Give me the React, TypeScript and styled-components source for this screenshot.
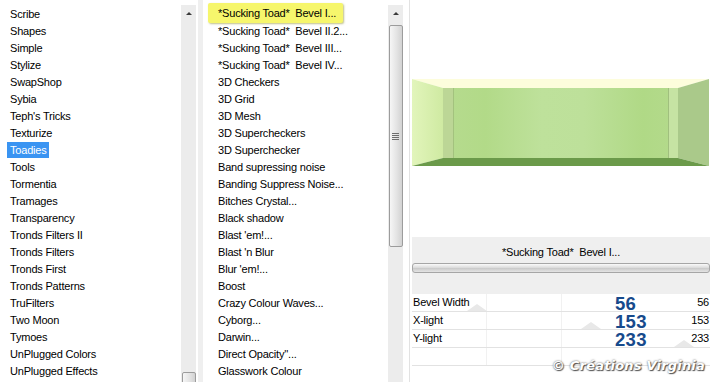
import React from "react"
import styled, {createGlobalStyle} from "styled-components"

const categories = [
  "Scribe",
  "Shapes",
  "Simple",
  "Stylize",
  "SwapShop",
  "Sybia",
  "Teph's Tricks",
  "Texturize",
  "Toadies",
  "Tools",
  "Tormentia",
  "Tramages",
  "Transparency",
  "Tronds Filters II",
  "Tronds Filters",
  "Tronds First",
  "Tronds Patterns",
  "TruFilters",
  "Two Moon",
  "Tymoes",
  "UnPlugged Colors",
  "UnPlugged Effects",
]

const filters = [
  "*Sucking Toad*  Bevel I...",
  "*Sucking Toad*  Bevel II.2...",
  "*Sucking Toad*  Bevel III...",
  "*Sucking Toad*  Bevel IV...",
  "3D Checkers",
  "3D Grid",
  "3D Mesh",
  "3D Supercheckers",
  "3D Superchecker",
  "Band supressing noise",
  "Banding Suppress Noise...",
  "Bitches Crystal...",
  "Black shadow",
  "Blast 'em!...",
  "Blast 'n Blur",
  "Blur 'em!...",
  "Boost",
  "Crazy Colour Waves...",
  "Cyborg...",
  "Darwin...",
  "Direct Opacity''...",
  "Glasswork Colour",
]

const params = [
  {label: "Bevel Width", value: 56},
  {label: "X-light", value: 153},
  {label: "Y-light", value: 233},
]

const GlobalStyle = createGlobalStyle`
  html, body {
    margin: 0;
    padding: 0;
    background: #fff;
    overflow: hidden;
  }
`

const Window = styled.div`
  position: relative;
  display: flex;
  width: 715px;
  height: 382px;
  overflow: hidden;
  background: #fff;
  color: #000;
  font-family: "Liberation Sans", Arial, sans-serif;
  font-size: 11px;
  letter-spacing: -0.2px;
`

const Pane = styled.div<{$width: number}>`
  display: flex;
  flex: none;
  width: ${p => p.$width}px;
  height: 100%;
`

const List = styled.ul<{$indent: number}>`
  flex: 1;
  margin: 0;
  padding: 6px 0 0 ${p => p.$indent}px;
  list-style: none;
  overflow: hidden;
`

const Item = styled.li`
  height: 17px;
  line-height: 17px;
  white-space: pre;
`

const Selected = styled.span`
  display: inline-block;
  margin: 0 0 0 -3px;
  padding: 0 2px 0 3px;
  line-height: 16px;
  vertical-align: top;
  background: #3a94f2;
  color: #fff;
`

const Picked = styled.span`
  display: inline-block;
  margin: -3px 0 0 -10px;
  padding: 2px 7px 1px 10px;
  line-height: 17px;
  vertical-align: top;
  background: #f6f66c;
  border-radius: 2px;
  box-shadow: 1px 1px 2px rgba(140, 140, 40, 0.55);
`

const Track = styled.div`
  display: flex;
  flex-direction: column;
  align-items: center;
  flex: none;
  width: 15px;
  margin-top: 5px;
  overflow: hidden;
  background: #ececec;
`

const Arrow = styled.div`
  display: flex;
  align-items: center;
  justify-content: center;
  flex: none;
  width: 100%;
  height: 17px;

  &::before {
    content: "";
    border-left: 3px solid transparent;
    border-right: 3px solid transparent;
    border-bottom: 3px solid #3a3a3a;
  }
`

const Thumb = styled.div<{$top: number; $height: number}>`
  display: flex;
  flex-direction: column;
  align-items: center;
  justify-content: center;
  gap: 1px;
  flex: none;
  box-sizing: border-box;
  width: 14px;
  height: ${p => p.$height}px;
  margin-top: ${p => p.$top}px;
  border: 1px solid #9c9c9c;
  border-radius: 2px;
  background: linear-gradient(90deg, #f6f6f6, #e2e2e2 60%, #d2d2d2);
`

const Grip = styled.span`
  width: 7px;
  height: 1px;
  background: #6e6e6e;
`

const Divider = styled.div<{$gap: number; $line: number; $color: string}>`
  flex: none;
  width: ${p => p.$gap}px;
  border-right: ${p => p.$line}px solid ${p => p.$color};
`

const Settings = styled.div`
  display: flex;
  flex-direction: column;
  flex: 1;
  padding: 0 5px 0 2px;
`

const Preview = styled.div`
  display: flex;
  flex: none;
  height: 237px;
  padding-top: 79px;
  box-sizing: border-box;
`

const InfoPanel = styled.div`
  display: flex;
  flex-direction: column;
  align-items: center;
  flex: none;
  height: 57px;
  box-sizing: border-box;
  padding-top: 7px;
  background: #efefef;
`

const FilterName = styled.div`
  line-height: 16px;
  white-space: pre;
`

const Progress = styled.div`
  box-sizing: border-box;
  width: 100%;
  height: 10px;
  margin-top: 3px;
  border: 1px solid #a6a6a6;
  border-radius: 3px;
  background: linear-gradient(#fafafa, #dcdcdc 45%, #cbcbcb 55%, #e4e4e4);
`

const Row = styled.div`
  position: relative;
  display: grid;
  grid-template-columns: 202px 1fr auto;
  align-items: center;
  height: 17px;
  border-bottom: 1px solid #e2e2e2;
  padding-left: 1px;
  background:
    linear-gradient(#f1f1f1, #f1f1f1) 25% 0 / 1px 100% no-repeat,
    linear-gradient(#f1f1f1, #f1f1f1) 50% 0 / 1px 100% no-repeat;
`

const Label = styled.span`
  position: relative;
  line-height: 17px;
`

const BigValue = styled.span`
  position: relative;
  top: 1px;
  height: 17px;
  line-height: 17px;
  color: #174a8c;
  font-size: 18.5px;
  font-weight: bold;
  letter-spacing: 0.3px;
`

const SmallValue = styled.span`
  position: relative;
  padding-right: 1px;
  line-height: 17px;
`

const Marker = styled.span`
  position: absolute;
  bottom: 0;
  transform: translateX(-50%);
  border-left: 10px solid transparent;
  border-right: 10px solid transparent;
  border-bottom: 7px solid #e8e8e8;
`

const Watermark = styled.div`
  position: absolute;
  right: 10px;
  bottom: 9px;
  color: #fff;
  font-family: "DejaVu Sans", Verdana, sans-serif;
  font-size: 13px;
  font-style: italic;
  font-weight: bold;
  letter-spacing: 0.2px;
  text-shadow: 0 0 2px #4a4a4a, 1px 1px 1px #555;
`

const Bevel = () => (
  <svg width="297" height="87" viewBox="0 0 297 87">
    <defs>
      <linearGradient id="face" x1="0" x2="1" y1="0" y2="0">
        <stop offset="0" stopColor="#b6db8f" />
        <stop offset="0.18" stopColor="#b2da88" />
        <stop offset="0.42" stopColor="#bee19b" />
        <stop offset="0.6" stopColor="#bde09a" />
        <stop offset="0.85" stopColor="#b0d986" />
        <stop offset="1" stopColor="#b4da8c" />
      </linearGradient>
      <linearGradient id="left" x1="0" x2="1" y1="0" y2="0">
        <stop offset="0" stopColor="#e2f5bb" />
        <stop offset="1" stopColor="#cfeaa2" />
      </linearGradient>
    </defs>
    <polygon points="0,0 297,0 266,9 31,9" fill="#fdfddc" />
    <polygon points="0,0 31,9 31,79 0,87" fill="url(#left)" />
    <polygon points="297,0 297,87 266,79 266,9" fill="#aac98a" />
    <polygon points="0,87 31,79 266,79 297,87" fill="#6b9a4a" />
    <rect x="31" y="9" width="235" height="70" fill="url(#face)" />
    <rect x="31" y="9" width="10" height="70" fill="#bcd696" />
    <rect x="41" y="9" width="1" height="70" fill="#a3c27e" />
    <rect x="256" y="9" width="10" height="70" fill="#c6e3a3" />
    <rect x="256" y="9" width="1" height="70" fill="#a0bf7e" />
  </svg>
)

const App = () => {
  return (
    <Window>
      <GlobalStyle />
      <Pane $width={203}>
        <List $indent={10}>
          {categories.map(name => (
            <Item key={name}>
              {name === "Toadies" ? <Selected>{name}</Selected> : name}
            </Item>
          ))}
        </List>
        <Track>
          <Arrow />
          <Thumb $top={350} $height={20} />
        </Track>
        <Divider $gap={2} $line={5} $color="#efefef" />
      </Pane>
      <Pane $width={207}>
        <List $indent={15}>
          {filters.map((name, i) => (
            <Item key={name}>{i === 0 ? <Picked>{name}</Picked> : name}</Item>
          ))}
        </List>
        <Track>
          <Arrow />
          <Thumb $top={3} $height={222}>
            <Grip />
            <Grip />
            <Grip />
            <Grip />
          </Thumb>
        </Track>
        <Divider $gap={6} $line={1} $color="#e2e2e2" />
      </Pane>
      <Settings>
        <Preview>
          <Bevel />
        </Preview>
        <InfoPanel>
          <FilterName>{filters[0]}</FilterName>
          <Progress />
        </InfoPanel>
        {params.map(p => (
          <Row key={p.label}>
            <Marker style={{left: `${(p.value / 255) * 100}%`}} />
            <Label>{p.label}</Label>
            <BigValue>{p.value}</BigValue>
            <SmallValue>{p.value}</SmallValue>
          </Row>
        ))}
        <Row />
      </Settings>
      <Watermark>© Créations Virginia</Watermark>
    </Window>
  )
}

export default App
